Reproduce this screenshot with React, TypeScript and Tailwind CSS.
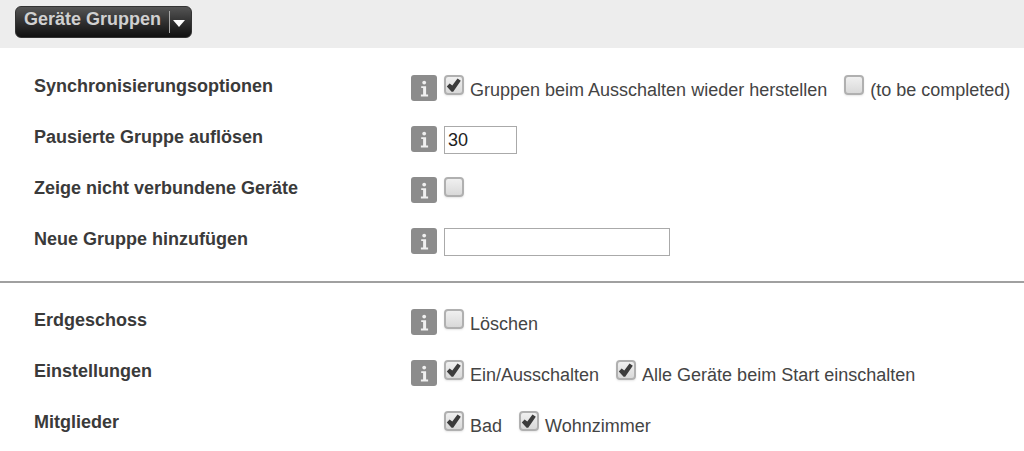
import { useState, ReactNode } from 'react'

interface OptionRowProps {
  label: string
  htmlFor?: string
  info?: boolean
  children: ReactNode
}

interface CheckOptionProps {
  id: string
  label?: string
  defaultChecked?: boolean
}

function InfoButton({ label }: { label: string }) {
  return (
    <button type="button" aria-label={`Info: ${label}`} className="h-[26px] w-[26px] shrink-0 rounded-[3px] bg-[#8c8c8c]">
      <svg viewBox="0 0 26 26" className="h-[26px] w-[26px]" fill="#f0f0f0" aria-hidden="true">
        <circle cx="13.2" cy="7.6" r="1.9" />
        <path d="M10.200 11.200h4.900v8.400h2V21.500H9.900v-1.900h2.200v-6.600h-1.900z" />
      </svg>
    </button>
  )
}

function CheckOption({ id, label, defaultChecked = false }: CheckOptionProps) {
  const [checked, setChecked] = useState(defaultChecked)

  return (
    <div className="flex items-start gap-1.5">
      <span className="grid h-5 w-5 shrink-0">
        <input
          id={id}
          type="checkbox"
          aria-label={label ? undefined : 'Zeige nicht verbundene Geräte'}
          checked={checked}
          onChange={(e) => setChecked(e.target.checked)}
          className="col-start-1 row-start-1 h-5 w-5 appearance-none rounded-[4px] border-2 border-[#b0b0b0] bg-linear-to-b from-[#f0f0f0] to-[#d9d9d9] shadow-[0_1px_2px_rgba(0,0,0,0.1)]"
        />
        {checked && (
          <svg viewBox="0 0 20 20" className="pointer-events-none col-start-1 row-start-1 h-5 w-5" aria-hidden="true">
            <path d="M2.800 11.600 5.600 8.400l2.700 2.100 5.200-7 3.300 2.200L9.200 16.800H7.600z" fill="#3c3c3c" />
          </svg>
        )}
      </span>
      {label && (
        <label htmlFor={id} className="pt-1 whitespace-nowrap">
          {label}
        </label>
      )}
    </div>
  )
}

function OptionRow({ label, htmlFor, info = true, children }: OptionRowProps) {
  return (
    <div className="grid min-h-[51px] grid-cols-[377px_1fr] items-start">
      {htmlFor ? (
        <label htmlFor={htmlFor} className="font-bold text-[#3a3a3a]">{label}</label>
      ) : (
        <span className="font-bold text-[#3a3a3a]">{label}</span>
      )}
      <div className="flex items-start gap-1.5">
        {info ? <InfoButton label={label} /> : <span className="w-[26px] shrink-0" />}
        <div className="flex items-start gap-[17px] pl-px">{children}</div>
      </div>
    </div>
  )
}

export default function App() {
  const [timeout, setTimeoutValue] = useState('30')
  const [newGroup, setNewGroup] = useState('')

  return (
    <div className="min-h-screen bg-white font-['Liberation_Sans',Arial,sans-serif] text-[18px] leading-[22px] text-[#444]">
      <header className="flex h-12 items-start bg-[#ededed] px-[15px] pt-1.5">
        <button
          type="button"
          className="flex h-8 items-start rounded-md border border-[#333] bg-linear-to-b from-[#555] to-[#111] pr-1.5 pl-2 font-bold text-[#d0d0d0]"
        >
          <span className="pt-px">Geräte Gruppen</span>
          <span className="mt-1 ml-2 flex h-[22px] items-end border-l border-[#aaa] pb-1.5 pl-[3px]">
            <svg viewBox="0 0 12 7" className="h-[7px] w-3" fill="#fff" aria-hidden="true">
              <path d="M0 0h12L6 7z" />
            </svg>
          </span>
        </button>
      </header>

      <form onSubmit={(e) => e.preventDefault()}>
        <section className="border-b-2 border-[#a0a0a0] pt-[27px] pr-3 pb-0.5 pl-[34px]">
          <OptionRow label="Synchronisierungsoptionen">
            <CheckOption id="restore" label="Gruppen beim Ausschalten wieder herstellen" defaultChecked />
            <CheckOption id="tbc" label="(to be completed)" />
          </OptionRow>
          <OptionRow label="Pausierte Gruppe auflösen" htmlFor="timeout">
            <input
              id="timeout"
              type="text"
              value={timeout}
              onChange={(e) => setTimeoutValue(e.target.value)}
              className="h-7 w-[73px] border border-[#aaa] bg-white px-[3px] text-[#222]"
            />
          </OptionRow>
          <OptionRow label="Zeige nicht verbundene Geräte" htmlFor="disconnected">
            <CheckOption id="disconnected" />
          </OptionRow>
          <OptionRow label="Neue Gruppe hinzufügen" htmlFor="new-group">
            <input
              id="new-group"
              type="text"
              value={newGroup}
              onChange={(e) => setNewGroup(e.target.value)}
              className="h-7 w-[226px] border border-[#aaa] bg-white px-[3px] text-[#222]"
            />
          </OptionRow>
        </section>

        <section className="pt-[26px] pr-3 pl-[34px]">
          <OptionRow label="Erdgeschoss">
            <CheckOption id="delete" label="Löschen" />
          </OptionRow>
          <OptionRow label="Einstellungen">
            <CheckOption id="power" label="Ein/Ausschalten" defaultChecked />
            <CheckOption id="power-all" label="Alle Geräte beim Start einschalten" defaultChecked />
          </OptionRow>
          <OptionRow label="Mitglieder" info={false}>
            <CheckOption id="bad" label="Bad" defaultChecked />
            <CheckOption id="wohnzimmer" label="Wohnzimmer" defaultChecked />
          </OptionRow>
        </section>
      </form>
    </div>
  )
}
